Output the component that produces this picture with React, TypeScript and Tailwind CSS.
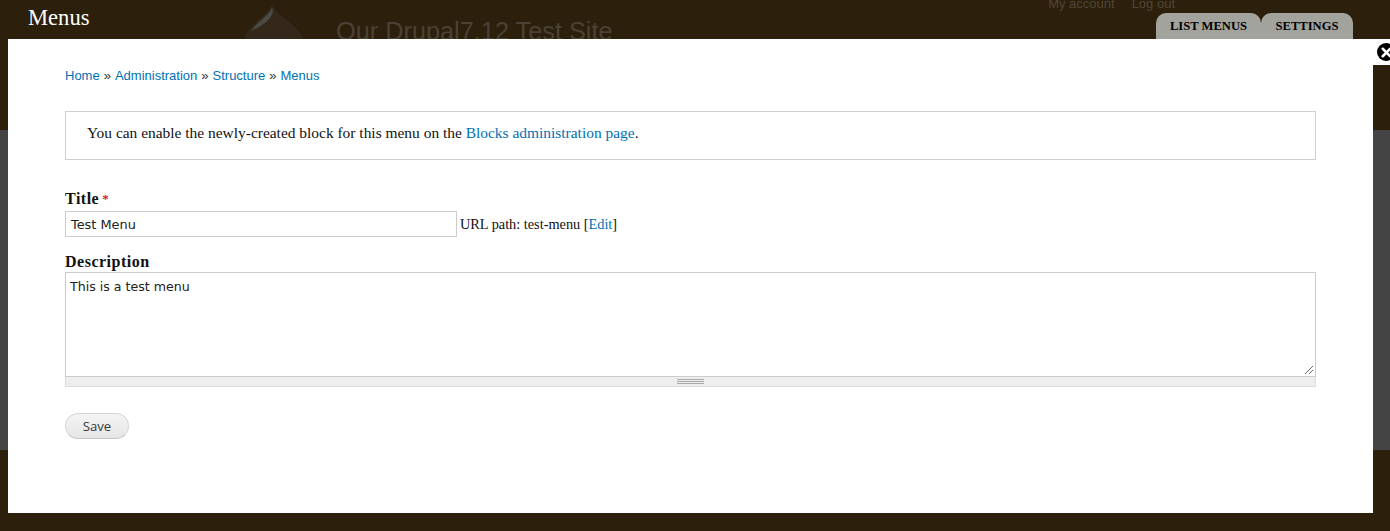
import { X } from "lucide-react";

const serif = "font-['Liberation_Serif','DejaVu_Serif',serif]";

function Crumb({ label }: { label: string }) {
  return <a className="text-[#0071b3]">{label}</a>;
}

export default function App() {
  return (
    <div className="relative h-[531px] w-[1390px] overflow-hidden bg-[#444444]">
      {/* page behind the overlay */}
      <div className="flex h-[130px] bg-[#2c1f0c]">
        <svg width="64" height="45" viewBox="0 0 64 45" className="ml-[243px] shrink-0">
          <path d="M29 4 C27 12 18 17 10 25 C5 30 2 35 1 40 L60 40 C58 30 48 23 40 17 C35 13 31 9 29 4 Z" fill="#33281a" />
          <path d="M29 7 C27 15 16 20 8 31 C16 27 27 22 30 12 Z" fill="#4c4a44" />
        </svg>
        <div className="ml-[29px] mt-[16px] font-['Liberation_Sans',sans-serif] text-[25.3px] leading-[30px] text-[#4a4234]">
          Our Drupal7.12 Test Site
        </div>
        <div className="ml-auto mr-[215px] -mt-[3px] flex gap-[17px] font-['Liberation_Sans',sans-serif] text-[13px] leading-[14px] text-[#4f4739]">
          <span>My account</span>
          <span>Log out</span>
        </div>
      </div>
      <div className="h-[320px] bg-[#444444]" />
      <div className="h-[81px] bg-[#2c1f0c]" />

      {/* overlay title and tabs */}
      <div className={`absolute left-[28px] top-[6px] text-[22.6px] leading-[24px] text-white ${serif}`}>Menus</div>
      <div className={`absolute left-[1156px] top-[13px] flex h-[27px] text-[12.6px] font-bold text-black ${serif}`}>
        <div className="flex w-[105px] items-center justify-center rounded-t-[10px] bg-[#a3a39d]">LIST MENUS</div>
        <div className="flex w-[92px] items-center justify-center rounded-t-[10px] bg-[#a3a39d]">SETTINGS</div>
      </div>

      {/* close button */}
      <div className="absolute left-[1373px] top-[39px] flex h-[26px] w-[17px] items-center overflow-hidden bg-white pl-[4px]">
        <div className="flex h-[18px] w-[18px] shrink-0 items-center justify-center rounded-full bg-black">
          <X size={15} strokeWidth={4} className="text-white" />
        </div>
      </div>

      {/* modal */}
      <div className="absolute left-[8px] top-[39px] h-[474px] w-[1365px] bg-white pl-[57px] pr-[57px] pt-[29px]">
        <div className="flex h-[15px] items-center gap-[4px] font-['Liberation_Sans',sans-serif] text-[13px] text-[#333333]">
          <Crumb label="Home" />
          <span>»</span>
          <Crumb label="Administration" />
          <span>»</span>
          <Crumb label="Structure" />
          <span>»</span>
          <Crumb label="Menus" />
        </div>

        <div className={`mt-[28px] flex h-[49px] w-[1251px] items-center border border-[#d0d0d0] pb-[6px] pl-[21px] text-[15.45px] text-[#111111] ${serif}`}>
          <span>
            You can enable the newly-created block for this menu on the{" "}
            <a className="text-[#0071b3]">Blocks administration page</a>.
          </span>
        </div>

        <div className={`mt-[30px] flex h-[18px] items-center text-[16px] font-bold leading-[18px] tracking-[0.5px] text-[#111111] ${serif}`}>
          Title
          <span className="ml-[3px] text-[13px] text-[#e0102f]">*</span>
        </div>
        <div className="mt-[3px] flex h-[26px] items-center">
          <div className="flex h-[26px] w-[392px] items-center border border-[#cccccc] pl-[5px] pt-[1px] font-['DejaVu_Sans',sans-serif] text-[12.9px] text-[#222222]">
            Test Menu
          </div>
          <span className={`ml-[3px] pt-[2px] text-[14.3px] text-[#111111] ${serif}`}>
            URL path: test-menu [<a className="text-[#0071b3]">Edit</a>]
          </span>
        </div>

        <div className={`mt-[15px] h-[20px] text-[16px] font-bold leading-[19px] tracking-[0.5px] text-[#111111] ${serif}`}>Description</div>
        <div className="relative h-[105px] w-[1251px] border border-[#cccccc] pl-[4px] pt-[6px] font-['DejaVu_Sans',sans-serif] text-[12.6px] leading-[15px] text-[#222222]">
          This is a test menu
          <svg width="10" height="10" viewBox="0 0 10 10" className="absolute bottom-px right-px">
            <path d="M1 9 L9 1 M5 9 L9 5" stroke="#666666" strokeWidth="1" />
          </svg>
        </div>
        <div className="flex h-[10px] w-[1251px] flex-col items-center justify-center gap-px border-x border-b border-[#dddddd] bg-[#eeeeee]">
          <div className="h-px w-[27px] bg-[#aaaaaa]" />
          <div className="h-px w-[27px] bg-[#aaaaaa]" />
          <div className="h-px w-[27px] bg-[#aaaaaa]" />
        </div>

        <button className="mt-[26px] flex h-[26px] w-[64px] items-center justify-center rounded-[13px] border border-[#d6d6d6] border-b-[#c4c4c4] bg-gradient-to-b from-[#f4f4f4] to-[#e6e6e6] pt-[2px] font-['Open_Sans',sans-serif] text-[13.2px] text-[#3a3a3a]">
          Save
        </button>
      </div>
    </div>
  );
}
